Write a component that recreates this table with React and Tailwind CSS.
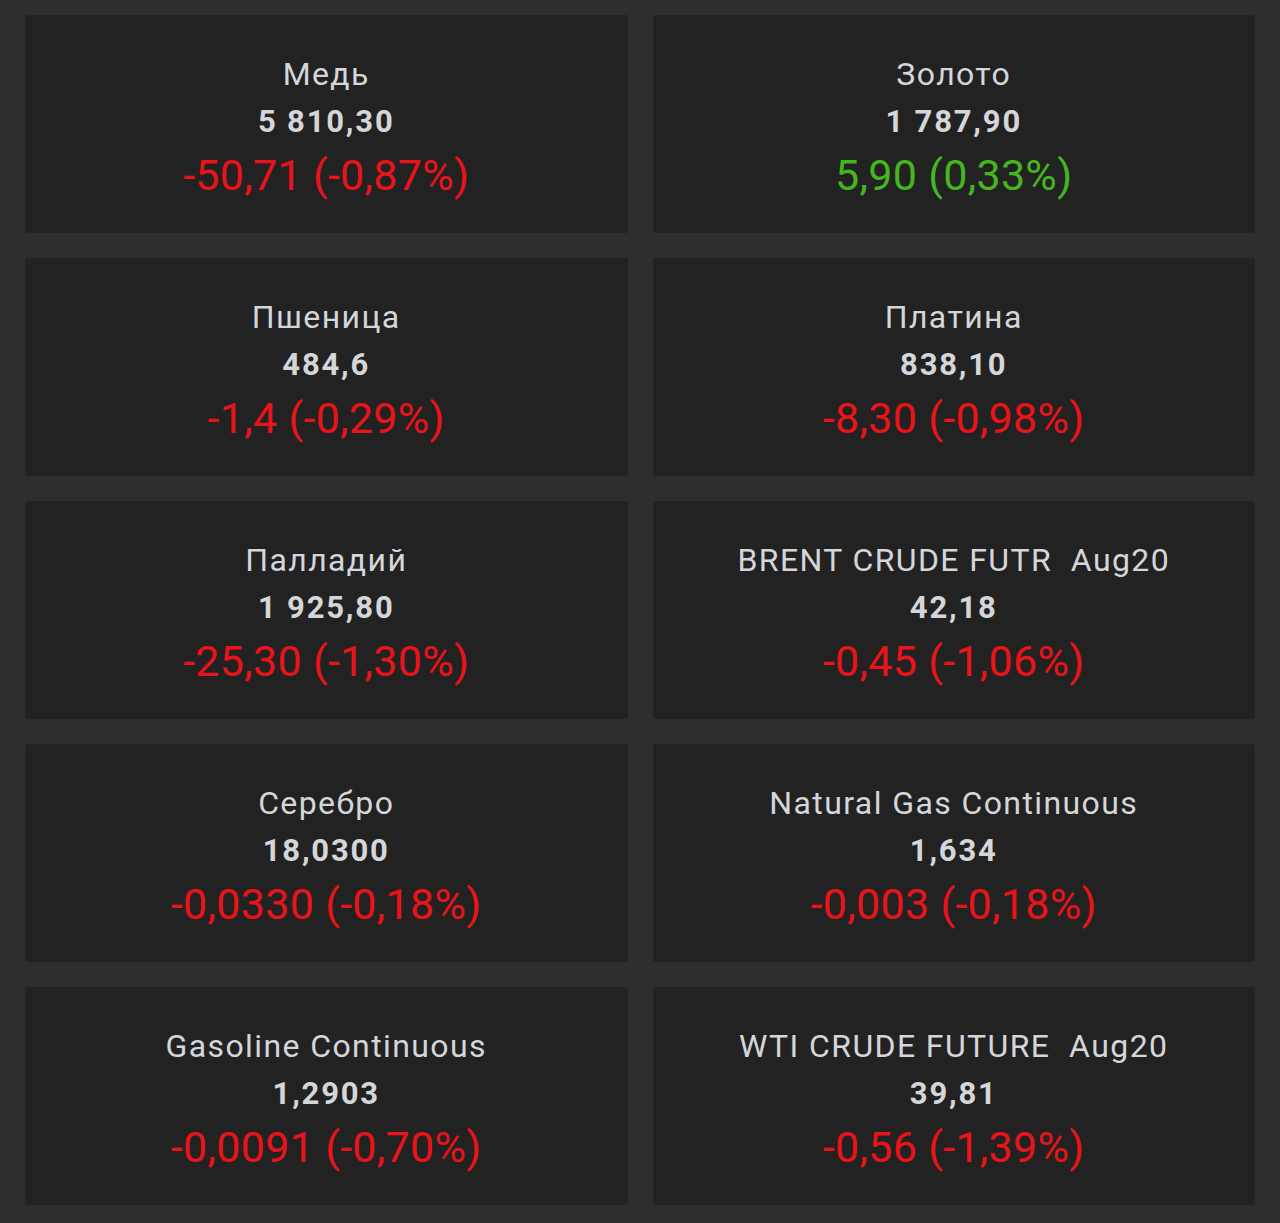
const items = [
  { name: "Медь", price: "5 810,30", change: "-50,71 (-0,87%)", up: false },
  { name: "Золото", price: "1 787,90", change: "5,90 (0,33%)", up: true },
  { name: "Пшеница", price: "484,6", change: "-1,4 (-0,29%)", up: false },
  { name: "Платина", price: "838,10", change: "-8,30 (-0,98%)", up: false },
  { name: "Палладий", price: "1 925,80", change: "-25,30 (-1,30%)", up: false },
  { name: "BRENT CRUDE FUTR  Aug20", price: "42,18", change: "-0,45 (-1,06%)", up: false },
  { name: "Серебро", price: "18,0300", change: "-0,0330 (-0,18%)", up: false },
  { name: "Natural Gas Continuous", price: "1,634", change: "-0,003 (-0,18%)", up: false },
  { name: "Gasoline Continuous", price: "1,2903", change: "-0,0091 (-0,70%)", up: false },
  { name: "WTI CRUDE FUTURE  Aug20", price: "39,81", change: "-0,56 (-1,39%)", up: false },
];

// one quote tile: name, last price, change
function Card({ item }) {
  return (
    <div className="flex h-[218px] flex-col items-center rounded-[3px] bg-[#222222] pt-[39px]">
      <div className="whitespace-pre text-[32px] leading-[40px] tracking-[1.4px] text-[#d4d6da]">
        {item.name}
      </div>
      <div className="mt-[9px] text-[31px] font-bold leading-[38px] tracking-[1.8px] text-[#d4d6da]">
        {item.price}
      </div>
      <div
        className={
          "mt-[9px] text-[43px] leading-[50px] tracking-[0.3px] " +
          (item.up ? "text-[#46b61e]" : "text-[#e8141a]")
        }
      >
        {item.change}
      </div>
    </div>
  );
}

export default function App() {
  return (
    <div
      className="min-h-[1223px] bg-[#2e2e2e] px-[25px] pt-[15px] pb-[20px]"
      style={{ fontFamily: "Roboto, 'Noto Sans', sans-serif" }}
    >
      <div className="grid grid-cols-2 gap-x-[25px] gap-y-[25px]">
        {items.map((item) => (
          <Card key={item.name} item={item} />
        ))}
      </div>
    </div>
  );
}
